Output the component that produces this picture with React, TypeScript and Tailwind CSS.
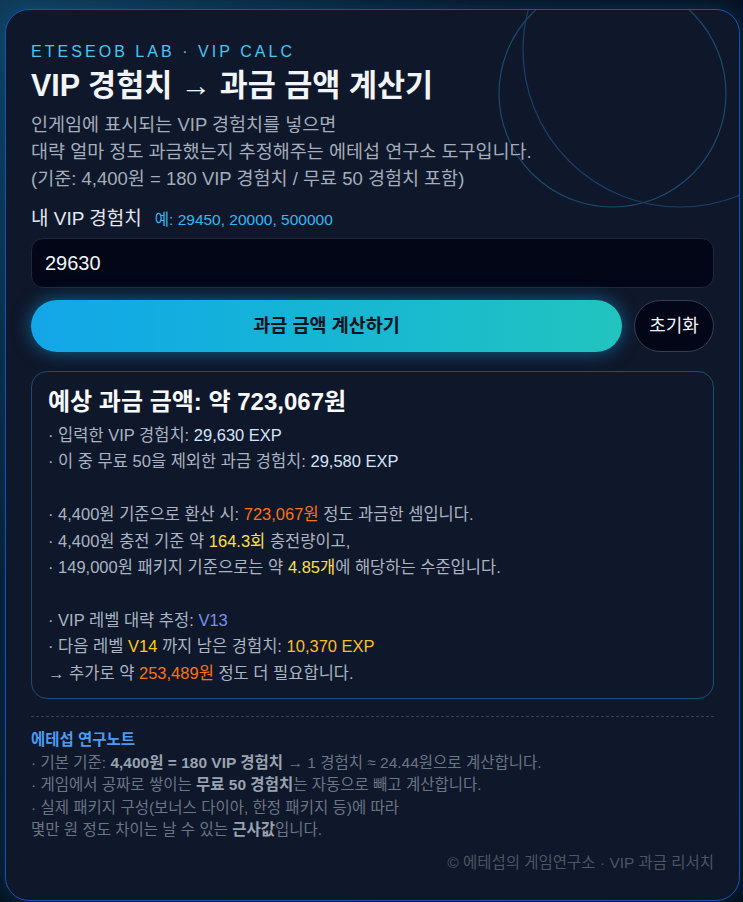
import React from "react";

function Orbits() {
  return (
    <svg
      className="pointer-events-none absolute left-0 top-0 h-[890px] w-[733px]"
      viewBox="0 0 733 890"
      fill="none"
    >
      <circle cx="606.5" cy="83.5" r="113.5" stroke="#1b4a6b" strokeWidth="1.2" />
      <circle cx="674" cy="40" r="157" stroke="#1b3f68" strokeWidth="1.2" />
    </svg>
  );
}

export default function App() {
  return (
    <div className="min-h-screen bg-[radial-gradient(ellipse_at_top_left,#0e3a57_0%,#071426_45%,#050b18_100%)] pl-[5px] pt-[9px] pb-[1px] font-['Liberation_Sans','Noto_Sans_CJK_KR',sans-serif]">
      <div className="relative h-[892px] w-[735px] overflow-hidden rounded-[24px] border border-[#1d4fb8] bg-[#0f172a] px-[25px] pt-[31px] shadow-[0_0_24px_rgba(14,165,233,0.25)]">
        <Orbits />

        <div className="relative">
          <p className="text-[16px] leading-[22px] tracking-[0.19em] text-[#4cc3f5]">
            ETESEOB LAB · VIP CALC
          </p>
          <h1 className="mt-[4px] text-[30.5px] font-bold leading-[36px] text-[#f1f5f9]">
            VIP 경험치 → 과금 금액 계산기
          </h1>
          <p className="mt-[8px] text-[18.5px] leading-[27px] text-[#a3adbb]">
            인게임에 표시되는 VIP 경험치를 넣으면
            <br />
            대략 얼마 정도 과금했는지 추정해주는 에테섭 연구소 도구입니다.
            <br />
            (기준: 4,400원 = 180 VIP 경험치 / 무료 50 경험치 포함)
          </p>

          <label className="mt-[15px] flex h-[24px] items-baseline gap-[13px]">
            <span className="text-[19px] leading-[24px] text-[#e2e8f0]">내 VIP 경험치</span>
            <span className="text-[15.5px] leading-[24px] text-[#38b6f2]">
              예: 29450, 20000, 500000
            </span>
          </label>

          <div className="mt-[7px] flex h-[50px] items-center rounded-[12px] border border-[#1e293b] bg-[#020617] px-[13px] text-[20px] text-[#f1f5f9]">
            29630
          </div>

          <div className="mt-[12px] flex gap-[12px]">
            <button className="h-[52px] flex-1 rounded-full bg-gradient-to-r from-[#13a6e9] to-[#22c4bf] text-[18.5px] font-bold text-[#0b1220] shadow-[0_0_18px_rgba(14,165,233,0.55)]">
              과금 금액 계산하기
            </button>
            <button className="h-[52px] w-[80px] rounded-full border border-[#334155] bg-[#020617] text-[18px] text-[#f1f5f9]">
              초기화
            </button>
          </div>

          <div className="mt-[19px] h-[328px] rounded-[16px] border border-[#1e4d72] bg-[#0f172a] px-[16px] pt-[14px]">
            <h2 className="text-[24px] font-bold leading-[32px] text-[#f8fafc]">
              예상 과금 금액: 약 723,067원
            </h2>
            <p className="mt-[4px] text-[16.5px] leading-[26.4px] text-[#aab4c2]">
              · 입력한 VIP 경험치: <span className="text-[#d6e4fb]">29,630 EXP</span>
              <br />· 이 중 무료 50을 제외한 과금 경험치:{" "}
              <span className="text-[#d6e4fb]">29,580 EXP</span>
              <br />
              <br />· 4,400원 기준으로 환산 시:{" "}
              <span className="text-[#f97316]">723,067원</span> 정도 과금한 셈입니다.
              <br />· 4,400원 충전 기준 약 <span className="text-[#fde047]">164.3회</span>{" "}
              충전량이고,
              <br />· 149,000원 패키지 기준으로는 약{" "}
              <span className="text-[#fde047]">4.85개</span>에 해당하는 수준입니다.
              <br />
              <br />· VIP 레벨 대략 추정: <span className="text-[#7c8ff2]">V13</span>
              <br />· 다음 레벨 <span className="text-[#facc15]">V14</span> 까지 남은 경험치:{" "}
              <span className="text-[#fbbf24]">10,370 EXP</span>
              <br />→ 추가로 약 <span className="text-[#f97316]">253,489원</span> 정도 더
              필요합니다.
            </p>
          </div>

          <div className="mt-[17px] border-t border-dashed border-[#334155]" />

          <div className="mt-[12px] text-[15.5px] leading-[22.6px] text-[#6b7585]">
            <p className="font-semibold text-[#4b9cf0]">에테섭 연구노트</p>
            <p>
              · 기본 기준: <b className="text-[#9aa3b0]">4,400원 = 180 VIP 경험치</b> → 1 경험치 ≈
              24.44원으로 계산합니다.
              <br />· 게임에서 공짜로 쌓이는{" "}
              <b className="text-[#9aa3b0]">무료 50 경험치</b>는 자동으로 빼고 계산합니다.
              <br />· 실제 패키지 구성(보너스 다이아, 한정 패키지 등)에 따라
              <br />
              몇만 원 정도 차이는 날 수 있는 <b className="text-[#9aa3b0]">근사값</b>입니다.
            </p>
          </div>

          <p className="mt-[10px] text-right text-[15.5px] leading-[22px] text-[#4b5563]">
            © 에테섭의 게임연구소 · VIP 과금 리서치
          </p>
        </div>
      </div>
    </div>
  );
}
